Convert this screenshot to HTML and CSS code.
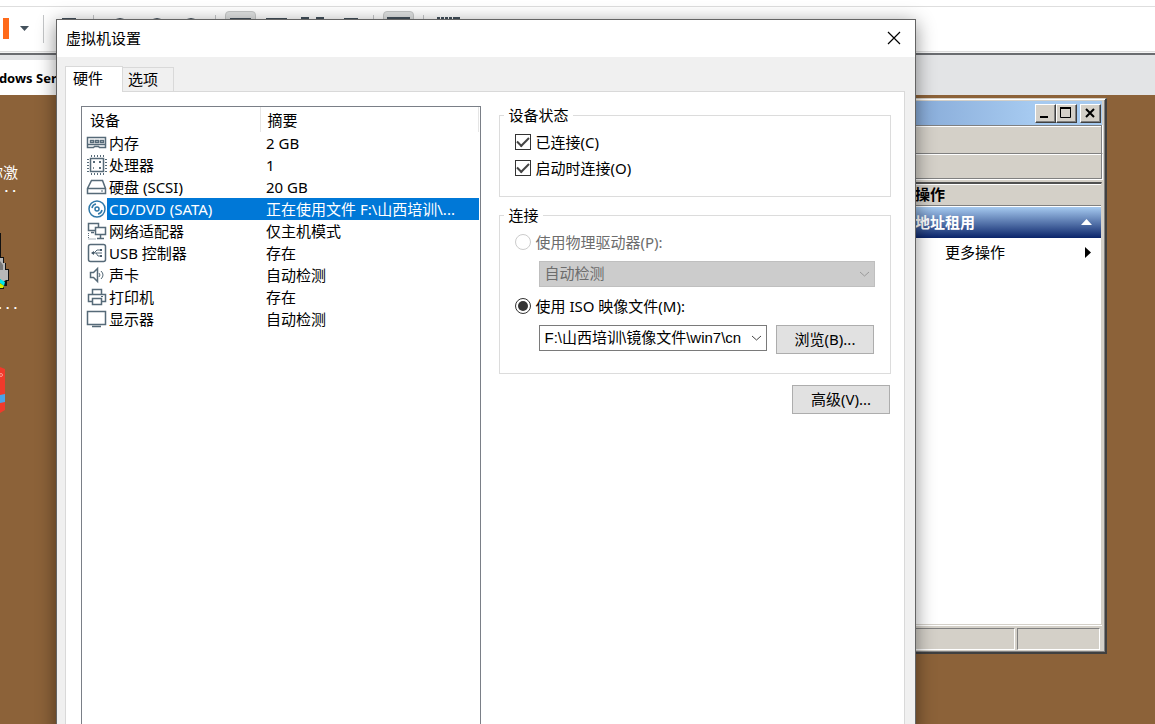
FILE: index.html
```html
<!DOCTYPE html>
<html lang="zh-CN">
<head>
<meta charset="utf-8">
<title>虚拟机设置</title>
<link rel="stylesheet" href="styles.css">
</head>
<body>
<div class="toolbar">
  <span class="pause"></span>
  <svg class="caret" width="9" height="5"><path d="M0 0h9L4.500 5z" fill="#44515c"/></svg>
  <span class="sep"></span>
  <span class="glyph glyph-s"></span>
  <span class="sep"></span>
  <span class="glyph glyph-round"></span>
  <span class="glyph glyph-round"></span>
  <span class="glyph glyph-round"></span>
  <span class="sep"></span>
  <span class="tool-on"><span class="glyph glyph-m"></span></span>
  <span class="glyph glyph-m"></span>
  <svg class="frame" width="23" height="22"><path d="M1 22V1h7M15 1h7v21" fill="#8d959b" stroke="#44515c" stroke-width="2"/></svg>
  <span class="glyph glyph-s"></span>
  <span class="sep"></span>
  <span class="tool-on"><svg class="frame" width="23" height="22"><path d="M1 1h21v20H1z" fill="#9aa0a4" stroke="#44515c" stroke-width="2"/></svg></span>
  <span class="sep"></span>
  <svg class="frame" width="23" height="22"><path d="M0 1h16" stroke="#44515c" stroke-width="2" stroke-dasharray="3 1"/><path d="M16 1h6v20" fill="none" stroke="#44515c" stroke-width="2"/><path d="M1 2v18" stroke="#44515c" stroke-dasharray="2 2"/></svg>
</div>
<div class="vm-tabs"><div class="vm-tab">Windows Server</div></div>

<main class="desktop">
  <div class="shortcut shortcut-a"><span>你激</span><span class="dots">...</span></div>
  <svg class="shortcut-disc" width="10" height="56"><path d="M0 0h1v24h3v6h2v6h3v12H7v5H4v3H0z" fill="#111"/><path d="M0 25h3v5h2v7h3v10H6l-3 2-3-3z" fill="#b8b8b8"/><path d="M0 28l3 4v5H0z" fill="#777"/><path d="M0 46l5 3-1 4-4-3z" fill="#00e5ee"/><path d="M0 50l4 3-1 2H0z" fill="#d4ee00"/></svg>
  <div class="shortcut shortcut-b"><span class="dots">...</span></div>
  <svg class="shortcut-box" width="6" height="46"><path d="M0 0l5 2v41l-5 3z" fill="#f03a2b"/><path d="M0 28l5-1v8l-5 1z" fill="#4aa3e8"/><circle cx="1" cy="8" r="1.500" fill="none" stroke="#ff9a90"/></svg>

  <section class="server">
    <div class="server-title">
      <button class="win-btn" aria-label="最小化"><svg width="12" height="12"><path d="M1 9h8v2H1z"/></svg></button>
      <button class="win-btn" aria-label="最大化"><svg width="12" height="12"><path d="M.5 .5h10v10H.5z" fill="none" stroke="#000"/><path d="M0 0h11v2H0z"/></svg></button>
      <button class="win-btn win-close" aria-label="关闭窗口"><svg width="12" height="12"><path d="M2 2l8 8M10 2l-8 8" stroke="#000" stroke-width="2"/></svg></button>
    </div>
    <div class="server-bar"></div>
    <div class="server-bar server-bar-low"></div>
    <div class="actions">
      <div class="actions-head">操作</div>
      <div class="actions-group">地址租用<svg width="11" height="6"><path d="M0 6h11L5.500 0z" fill="#fff"/></svg></div>
      <div class="actions-item">更多操作<svg width="6" height="11"><path d="M0 0v11l6-5.500z"/></svg></div>
    </div>
    <div class="status"><span class="status-main"></span><span class="status-side"></span></div>
  </section>
</main>

<section class="dialog" role="dialog" aria-labelledby="dlg-title">
  <header class="dialog-title">
    <span id="dlg-title">虚拟机设置</span>
    <button class="close" aria-label="关闭"><svg width="14" height="14"><path d="M1 1l12 12M13 1L1 13" stroke="#000" stroke-width="1.200"/></svg></button>
  </header>
  <nav class="tabs" role="tablist">
    <button class="tab tab-on" role="tab" aria-selected="true">硬件</button>
    <button class="tab" role="tab" aria-selected="false">选项</button>
  </nav>
  <div class="panel">
    <div class="list">
      <table class="devices">
        <thead><tr><th class="col-name">设备</th><th class="col-sum">摘要</th></tr></thead>
        <tbody>
          <tr><td><div class="cell"><svg width="22" height="20" class="ico"><path d="M1.500 4.500h18v10h-6l-1-1h-4l-1 1h-6zM2 11.500h17"/><path d="M4.500 7.500h3v2h-3zM9.500 7.500h3v2h-3zM14.500 7.500h3v2h-3z"/></svg><span>内存</span></div></td><td>2 GB</td></tr>
          <tr><td><div class="cell"><svg width="22" height="20" class="ico"><path d="M4.500 3.500h13v13h-13z"/><path d="M5 1h13M5 19h13M2 4v13M20 4v13" stroke-dasharray="1 2" stroke-width="2"/><path d="M7 7h2M13 7h2M13 13h2" stroke-width="2"/><path d="M7 13h1"/></svg><span>处理器</span></div></td><td>1</td></tr>
          <tr><td><div class="cell"><svg width="22" height="20" class="ico"><path d="M5.500 3.500h11l3 8v5h-18v-5zM2 11.500h17"/><path d="M15 14h2" stroke-width="1"/></svg><span>硬盘 (SCSI)</span></div></td><td>20 GB</td></tr>
          <tr class="picked"><td><div class="cell"><svg width="22" height="20" class="ico ico-disc"><circle cx="11" cy="10" r="8"/><circle cx="11" cy="10" r="2"/><path d="M6 9a5 5 0 0 1 4-4M16 11a5 5 0 0 1-4 4"/></svg><span>CD/DVD (SATA)</span></div></td><td>正在使用文件 F:\山西培训\...</td></tr>
          <tr><td><div class="cell"><svg width="22" height="20" class="ico"><path d="M2.500 2.500h10v7h-10z" fill="#fff"/><path d="M9.500 6.500h10v7h-10z" fill="#fff"/><path d="M5 11.500h3M14.500 14v3M11 17.500h7"/><path d="M2.500 12v6h8" stroke-width="1" stroke-dasharray="1 1"/></svg><span>网络适配器</span></div></td><td>仅主机模式</td></tr>
          <tr><td><div class="cell"><svg width="22" height="20" class="ico"><rect x="2.500" y="1.500" width="17" height="17" rx="2"/><path d="M6 10h10M8 10l3-3h3M10 10l2 3h2" stroke-width="1"/><path d="M5 10l3-2v4zM14 6h2v2h-2zM14 12h2v2h-2z" fill="#465a69" stroke="none"/></svg><span>USB 控制器</span></div></td><td>存在</td></tr>
          <tr><td><div class="cell"><svg width="22" height="20" class="ico"><path d="M4.500 7.500h3l4-4v13l-4-4h-3z"/><path d="M13 8q2 2 0 4M15 6q4 4 0 8" stroke-width="1"/></svg><span>声卡</span></div></td><td>自动检测</td></tr>
          <tr><td><div class="cell"><svg width="22" height="20" class="ico"><path d="M6 14.500H2.500v-7h17v7H16M6.500 7.500v-5h9v5M6.500 11.500h9v6h-9z"/><path d="M15 9.500h2" stroke-width="1"/></svg><span>打印机</span></div></td><td>存在</td></tr>
          <tr><td><div class="cell"><svg width="22" height="20" class="ico"><path d="M1.500 2.500h18v13h-18zM6 17.500h9"/></svg><span>显示器</span></div></td><td>自动检测</td></tr>
        </tbody>
      </table>
    </div>
    <div class="settings">
      <fieldset class="group group-state">
        <legend>设备状态</legend>
        <label class="opt"><input type="checkbox" class="check" checked><span>已连接(C)</span></label>
        <label class="opt"><input type="checkbox" class="check" checked><span>启动时连接(O)</span></label>
      </fieldset>
      <fieldset class="group group-conn">
        <legend>连接</legend>
        <label class="opt opt-off"><input type="radio" name="src" class="radio" disabled><span>使用物理驱动器(P):</span></label>
        <div class="combo combo-off">
          <select aria-label="物理驱动器" disabled><option>自动检测</option></select>
          <svg width="11" height="6"><path d="M1 1l4.500 4L10 1" fill="none" stroke="#9a9a9a"/></svg>
        </div>
        <label class="opt"><input type="radio" name="src" class="radio" checked><span>使用 ISO 映像文件(M):</span></label>
        <div class="iso-row">
          <div class="combo">
            <select aria-label="ISO 映像文件"><option>F:\山西培训\镜像文件\win7\cn</option></select>
            <svg width="11" height="6"><path d="M1 1l4.500 4L10 1" fill="none" stroke="#444"/></svg>
          </div>
          <button class="btn">浏览(B)...</button>
        </div>
      </fieldset>
      <button class="btn btn-adv">高级(V)...</button>
    </div>
  </div>
</section>
</body>
</html>
```

FILE: styles.css
```css
* { box-sizing: border-box; }
body {
  margin: 0;
  height: 100vh;
  overflow: hidden;
  position: relative;
  display: flex;
  flex-direction: column;
  background: #8c6239;
  color: #000;
  font: 15px/22px "Noto Sans", "Noto Sans CJK SC", sans-serif;
}
button, select { font: inherit; color: inherit; }
svg { display: block; flex: none; }

/* main window toolbar */
.toolbar {
  height: 55px;
  flex: none;
  display: grid;
  grid-template-columns: 17px 23px 19px 31px 18px 37px 34px 33px 10px 41px 35px 43px 29px 10px 40px 14px 23px;
  align-items: start;
  padding: 11px 0 0 3px;
  background: linear-gradient(#fff 6px, #dedede 6px, #dedede 7px, #fff 7px, #fff 51px, #dcdcdc 51px, #dcdcdc 52px, #f4f4f4 52px, #f4f4f4 53px, #6a6c70 53px);
}
.pause { width: 6px; height: 21px; margin-top: 7px; background: #ff6a1a; }
.caret { margin-top: 15px; }
.sep { width: 1px; height: 28px; margin-top: 4px; background: #c4c6c8; }
.glyph { height: 20px; margin-top: 7px; background: #44515c; }
.glyph-s { width: 14px; }
.glyph-m { width: 21px; }
.glyph-round { width: 18px; border-radius: 9px; }
.frame { margin-top: 6px; }
.tool-on {
  width: 31px;
  height: 34px;
  display: flex;
  justify-content: center;
  border: 1px solid #c6c8c8;
  border-radius: 4px;
  background: #dfe1e1;
}
.tool-on .frame { margin-top: 5px; }
.tool-on .glyph { margin-top: 6px; }
.vm-tabs {
  height: 40px;
  flex: none;
  display: flex;
  align-items: end;
  background: #e3e4e6;
}
.vm-tab {
  height: 35px;
  margin-left: -28px;
  padding: 0 12px 0 2px;
  background: #fff;
  font-size: 13px;
  font-weight: 700;
  line-height: 36px;
}

/* guest desktop */
.desktop { flex: 1; position: relative; }
.shortcut {
  position: absolute;
  left: -12px;
  display: flex;
  flex-direction: column;
  align-items: end;
  color: #fff;
  line-height: 16px;
}
.shortcut-a { top: 69px; }
.shortcut-b { top: 202px; left: -4px; }
.dots { font: 700 13px/18px "Liberation Mono", monospace; }
.shortcut-disc { position: absolute; left: 0; top: 138px; }
.shortcut-box { position: absolute; left: 0; top: 272px; }
.server {
  position: absolute;
  top: 3px;
  right: 48px;
  bottom: 70px;
  width: 600px;
  display: flex;
  flex-direction: column;
  padding: 2px 3px 1px 2px;
  background: #d4d0c8;
  border: 1px solid #d4d0c8;
  border-right: 2px solid #404040;
  border-bottom: 2px solid #404040;
  box-shadow: inset 1px 1px #fff, inset -1px -1px #808080;
}
.server-title {
  height: 24px;
  display: flex;
  justify-content: flex-end;
  align-items: center;
  padding-right: 1px;
  background: linear-gradient(90deg, #0a246a, #83a6d4 65%, #a6caf0 88%);
}
.win-btn {
  width: 21px;
  height: 19px;
  padding: 2px 3px;
  background: #d4d0c8;
  border: 1px solid #fff;
  border-right-color: #404040;
  border-bottom-color: #404040;
  box-shadow: inset -1px -1px #808080;
}
.win-close { margin-left: 3px; }
.server-bar {
  height: 28px;
  border: 1px solid #808080;
  border-bottom: 0;
  box-shadow: inset 0 1px #fff, 1px 0 #fff;
}
.server-bar-low { height: 26px; border-bottom: 1px solid #808080; box-shadow: inset 0 1px #fff, 1px 1px #fff; }
.actions {
  flex: 1;
  margin-top: 3px;
  background: #fff;
  border-top: 2px solid #505050;
  border-right: 1px solid #d4d0c8;
  border-bottom: 1px solid #d4d0c8;
  box-shadow: 0 1px #fff;
}
.actions-head, .actions-group, .actions-item { padding-left: 405px; }
.actions-head { height: 22px; margin-bottom: 1px; background: #d4d0c8; border-top: 1px solid #fff; border-bottom: 1px solid #808080; font-weight: 700; line-height: 18px; }
.actions-group {
  height: 31px;
  display: flex;
  align-items: center;
  justify-content: space-between;
  padding-right: 9px;
  background: linear-gradient(#a6caf0, #0a246a);
  color: #fff;
  font-weight: 700;
  line-height: 20px;
  padding-bottom: 2px;
}
.actions-item { display: flex; align-items: center; justify-content: space-between; height: 28px; padding: 0 10px 0 435px; }
.status { height: 26px; display: flex; gap: 2px; padding: 3px 2px 1px 0; }
.status span { border: 1px solid #808080; border-right-color: #fff; border-bottom-color: #fff; }
.status-main { flex: 1; }
.status-side { width: 83px; }

/* settings dialog */
.dialog {
  position: absolute;
  top: 19px;
  left: 56px;
  right: 239px;
  bottom: -12px;
  display: flex;
  flex-direction: column;
  background: #f0f0f0;
  border: 1px solid #646464;
  box-shadow: 0 4px 18px rgba(0, 0, 0, .45);
}
.dialog-title {
  height: 37px;
  flex: none;
  display: flex;
  align-items: center;
  justify-content: space-between;
  padding: 0 14px 2px 9px;
  background: #fff;
}
.close { padding: 0; border: 0; background: none; }
.tabs { height: 34px; flex: none; display: flex; align-items: end; padding-left: 8px; }
.tab { height: 24px; padding: 0 15px 1px 5px; background: #f0f0f0; border: 1px solid #d9d9d9; border-left: 0; border-bottom: 0; }
.tab-on {
  height: 26px;
  margin-bottom: -1px;
  padding: 0 19px 4px 7px;
  background: #fff;
  border-left: 1px solid #d9d9d9;
  position: relative;
  z-index: 1;
}
.panel {
  flex: 1;
  display: flex;
  gap: 18px;
  margin: 0 10px 0 8px;
  padding: 14px 13px 0 15px;
  background: #fff;
  border: 1px solid #d9d9d9;
}
.list { flex: 399 1 0; border: 1px solid #7a7f87; padding-right: 1px; }
.devices { width: 100%; table-layout: fixed; border-collapse: collapse; }
.devices th { height: 25px; padding: 0 7px; text-align: left; font-weight: 400; border-right: 1px solid #e5e5e5; line-height: 24px; }
.devices th.col-name { width: 178px; padding-left: 8px; }
.devices td { height: 22px; padding: 0; white-space: nowrap; line-height: 22px; }
.devices td + td { padding-left: 6px; }
.cell { display: flex; align-items: center; padding-left: 4px; height: 22px; }
.cell span { flex: 1; padding-left: 2px; margin-left: -1px; }
.ico { fill: none; stroke: #566a78; stroke-width: 1.500; }
.ico-disc { stroke: #2f78a8; }
.picked .cell span, .picked td + td { background: #0078d7; color: #fff; }

.settings { flex: 393 1 0; display: flex; flex-direction: column; }
.group { min-width: 0; margin: 0; border: 1px solid #dcdcdc; }
.group legend { padding: 0 4px; margin-left: -11px; height: 18px; line-height: 18px; }
.group-state { height: 91px; padding: 5px 15px 0; }
.group-conn { height: 168px; margin-top: 9px; padding: 5px 15px 0; }
.opt { display: flex; align-items: center; gap: 4px; height: 26px; }
.opt-off { color: #6d6d6d; }
.check, .radio { appearance: none; flex: none; margin: 0; width: 16px; height: 16px; border: 1px solid #333; background: #fff; display: grid; place-items: center; }
.check:checked::before { content: ""; width: 10px; height: 5px; margin-top: -3px; border: solid #444; border-width: 0 0 2px 2px; transform: rotate(-45deg); }
.radio { border-radius: 50%; }
.radio:checked::before { content: ""; width: 10px; height: 10px; border-radius: 50%; background: #333; }
.radio:disabled { border-color: #ccc; }
.combo { position: relative; height: 26px; flex: 1; }
.combo select {
  appearance: none;
  width: 100%;
  height: 26px;
  padding: 0 22px 0 4px;
  border: 1px solid #7a7a7a;
  border-radius: 0;
  background: #fff;
  font-family: "Liberation Sans", "Noto Sans CJK SC", sans-serif;
  line-height: 24px;
}
.combo svg { position: absolute; right: 5px; top: 10px; pointer-events: none; }
.combo-off { margin: 6px 0 6px 24px; }
.combo-off select { background: #ccc; border-color: #bfbfbf; color: #6d6d6d; opacity: 1; }
.iso-row { display: flex; gap: 9px; margin: 6px 1px 0 24px; }
.btn { flex: none; width: 98px; height: 29px; padding: 0 0 1px; background: #e1e1e1; border: 1px solid #adadad; }
.btn-adv { align-self: flex-end; margin: 11px 1px 0 0; }
```
